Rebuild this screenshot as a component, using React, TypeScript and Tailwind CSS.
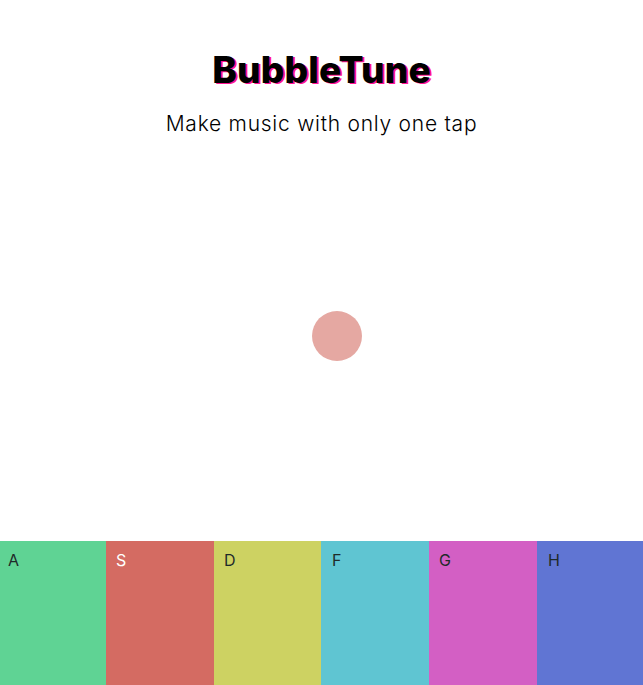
const keys = [
    { key: "A", bg: "bg-[#5fd394]", text: "text-[#1f2a2a]", pad: "pl-[8px]" },
    { key: "S", bg: "bg-[#d46b62]", text: "text-white", pad: "pl-[10px]" },
    { key: "D", bg: "bg-[#cdd262]", text: "text-[#1f2a2a]", pad: "pl-[10px]" },
    { key: "F", bg: "bg-[#5fc5d2]", text: "text-[#1f2a2a]", pad: "pl-[11px]" },
    { key: "G", bg: "bg-[#d35fc4]", text: "text-[#1f2a2a]", pad: "pl-[10px]" },
    { key: "H", bg: "bg-[#6075d3]", text: "text-[#1f2a2a]", pad: "pl-[11px]" },
];

const App = () => {
    return (
        <div className="h-[685px] w-full flex flex-col bg-white font-['Inter',sans-serif] overflow-hidden">
            {/* Header */}
            <div className="pt-[49px] flex flex-col items-center">
                <h1 className="text-[37px] leading-[42px] font-extrabold tracking-[0.2px] text-black [text-shadow:2px_1px_0_#ff1493]">
                    BubbleTune
                </h1>
                <p className="mt-[19px] text-[21px] leading-[28px] font-light tracking-[0.75px] text-black">Make music with only one tap</p>
            </div>

            {/* Stage */}
            <div className="flex-1 relative">
                <div className="absolute left-[312px] top-[173px] w-[50px] h-[50px] rounded-full bg-[#e5a8a2]" />
            </div>

            {/* Keys */}
            <div className="h-[144px] grid grid-cols-[106px_108px_107px_108px_108px_1fr]">
                {keys.map(k => (
                    <div key={k.key} className={`${k.bg} ${k.pad} pt-[7px]`}>
                        <span className={`text-[16px] ${k.text}`}>{k.key}</span>
                    </div>
                ))}
            </div>
        </div>
    );
};

export default App;
